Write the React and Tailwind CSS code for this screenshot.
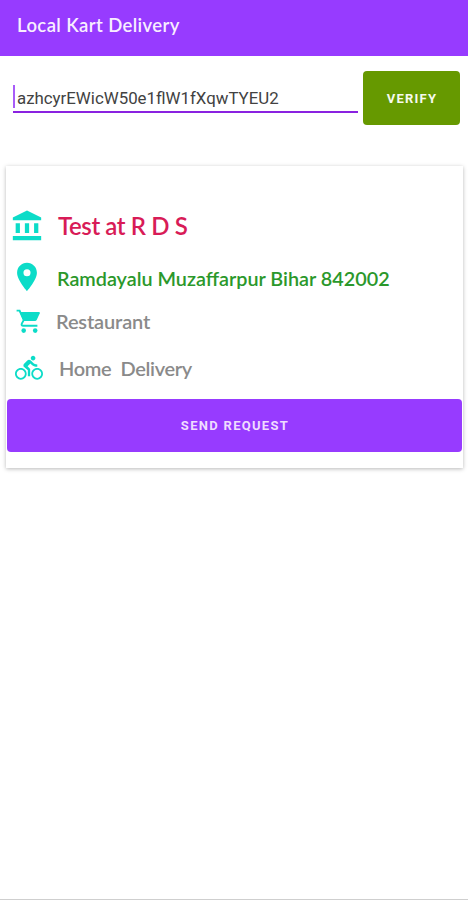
import {useState} from "react";
import {MdAccountBalance, MdDirectionsBike, MdPlace} from "react-icons/md";

function CartIcon({className}) {
  return (
    <svg viewBox="0 0 27 27" fill="none" className={className}>
      <path d="M1.6 2.6H4.6L8.8 12L6.8 15.6Q6 17.8 8.2 17.8H22.4" stroke="currentColor" strokeWidth="1.9" />
      <path d="M4.6 3.9H24Q25.4 4 24.8 5.3L21.7 12Q21.2 13 20 13H8.6Z" fill="currentColor" />
      <circle cx="8.7" cy="22.6" r="2.3" fill="currentColor" />
      <circle cx="20.2" cy="22.6" r="2.3" fill="currentColor" />
    </svg>
  );
}

function Header() {
  return (
    <header className="flex h-[56px] items-start bg-[#973bff] pl-[17px] pt-[12px]">
      <h1 className="font-['Lato','Open_Sans',sans-serif] text-[18.5px] leading-[26px] font-semibold tracking-[0.4px] text-[#f8eeff]">
        Local Kart Delivery
      </h1>
    </header>
  );
}

function Row({icon, className, children}) {
  return (
    <div className={`flex items-center ${className}`}>
      {icon}
      <span className="whitespace-pre">{children}</span>
    </div>
  );
}

function App() {
  const [code, setCode] = useState("azhcyrEWicW50e1flW1fXqwTYEU2");

  return (
    <div className="flex h-[900px] w-[468px] flex-col overflow-hidden border-b border-[#cfcfcf] bg-white font-['Roboto',sans-serif]">
      <Header />

      <form onSubmit={(e) => e.preventDefault()} className="flex h-[69px] items-start pt-[15px] pl-[13px]">
        <div className="mr-[5px] flex h-[42px] w-[345px] items-end border-b-2 border-[#8a22e0]">
          <span className="mb-[3px] h-[23px] w-[2px] bg-[#a85cf8]" />
          <input
            type="text"
            value={code}
            onChange={(e) => setCode(e.target.value)}
            className="h-[26px] w-[340px] pl-[2px] text-[16.85px] text-[#424242] outline-none"
          />
        </div>
        <button
          type="submit"
          className="h-[54px] w-[97px] rounded-[4px] bg-[#669900] pt-[2px] pl-[1px] text-[13px] font-bold tracking-[1.2px] text-[#f6faee]"
        >
          VERIFY
        </button>
      </form>

      <section className="mt-[41px] ml-[6px] flex h-[302px] w-[457px] flex-col bg-white pt-[43px] shadow-[0_1px_4px_rgba(0,0,0,0.28)]">
        <div className="flex flex-col font-['Lato','Open_Sans',sans-serif] font-semibold">
          <Row
            icon={<MdAccountBalance className="mr-[14px] ml-[4px] size-[34px] text-[#0cdcc8]" />}
            className="h-[34px] text-[24px] tracking-[-0.4px] text-[#d81b57]"
          >
            Test at R D S
          </Row>
          <Row
            icon={<MdPlace className="mr-[13px] mb-[3px] ml-[4px] size-[34px] text-[#0cdcc8]" />}
            className="mt-[18px] h-[35px] text-[19.8px] text-[#2b982b]"
          >
            Ramdayalu Muzaffarpur Bihar 842002
          </Row>
          <Row
            icon={<CartIcon className="mr-[14px] ml-[9px] size-[27px] text-[#0cdcc8]" />}
            className="mt-[11px] h-[28px] text-[20px] tracking-[-0.15px] text-[#8a8a8a]"
          >
            Restaurant
          </Row>
          <Row
            icon={<MdDirectionsBike className="mr-[16px] ml-[9px] size-[28px] text-[#0cdcc8]" />}
            className="mt-[19px] h-[28px] text-[20px] tracking-[-0.35px] text-[#8a8a8a]"
          >
            {"Home  Delivery"}
          </Row>
        </div>
        <button
          type="button"
          className="mt-[17px] ml-[1px] h-[53px] w-[455px] rounded-[4px] bg-[#973bff] pl-[1px] text-[13px] font-bold tracking-[1.3px] text-[#efdcff]"
        >
          SEND REQUEST
        </button>
      </section>
    </div>
  );
}

export default App;
